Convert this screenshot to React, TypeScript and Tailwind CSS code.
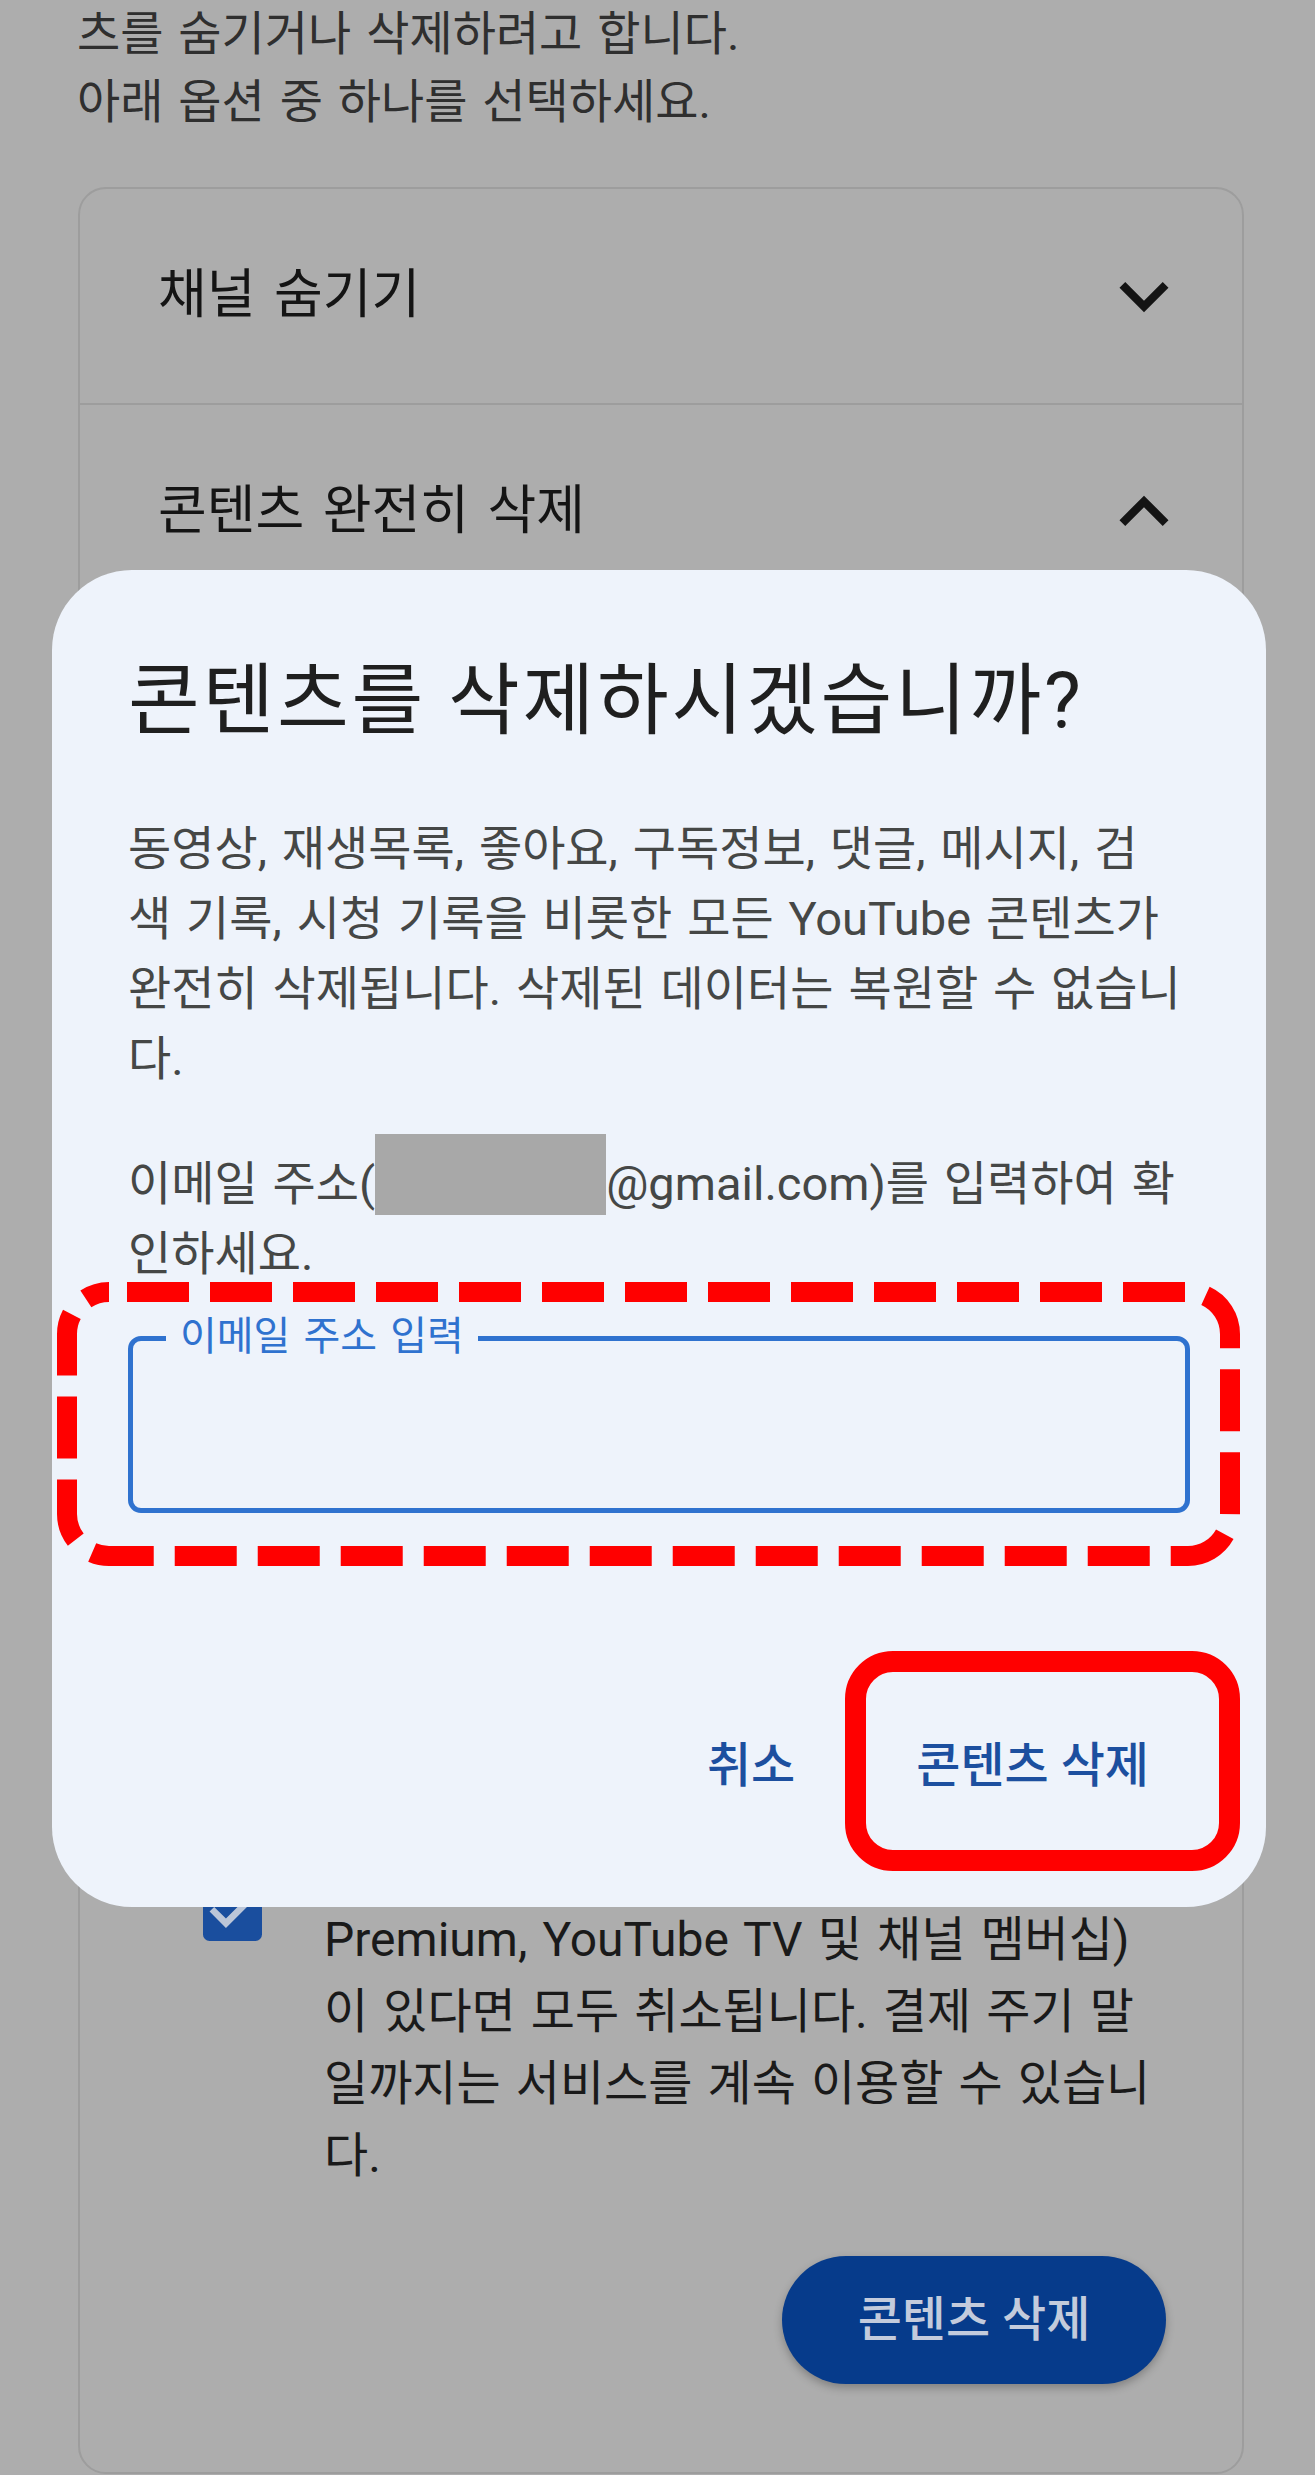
import React from 'react';

const FONT = "font-['Roboto','Noto_Sans_CJK_KR',sans-serif]";

function Chevron({ up }: { up?: boolean }) {
  return (
    <svg width="98" height="98" viewBox="0 0 24 24" fill="#141414" className="shrink-0">
      <path
        d={
          up
            ? 'M12 8l-6 6 1.41 1.41L12 10.83l4.59 4.58L18 14z'
            : 'M16.59 8.59L12 13.17 7.41 8.59 6 10l6 6 6-6z'
        }
      />
    </svg>
  );
}

function CheckBox() {
  return (
    <svg width="59" height="59" viewBox="3 3 18 18" className="shrink-0">
      <rect x="3" y="3" width="18" height="18" rx="2" fill="#1a4e9e" />
      <path d="M10 17l-5-5 1.41-1.41L10 14.17l7.59-7.59L19 8l-9 9z" fill="#bcc6d8" />
    </svg>
  );
}

function DeleteDialog() {
  return (
    <div className="absolute left-[52px] top-[570px] w-[1214px] h-[1337px] rounded-[80px] bg-[#eef3fb] pt-[87px] px-[76px]">
      <h2 className="text-[78px] leading-[90px] tracking-[0.035em] text-[#1f1f1f] whitespace-nowrap [word-spacing:normal]">
        콘텐츠를 삭제하시겠습니까?
      </h2>

      <p className="mt-[67px] text-[47px] leading-[70px] text-[#454746] whitespace-nowrap">
        동영상, 재생목록, 좋아요, 구독정보, 댓글, 메시지, 검<br />
        색 기록, 시청 기록을 비롯한 모든 YouTube 콘텐츠가<br />
        완전히 삭제됩니다. 삭제된 데이터는 복원할 수 없습니<br />
        다.
      </p>

      <p className="mt-[55px] text-[47px] leading-[70px] text-[#454746] whitespace-nowrap">
        이메일 주소(
        <span className="inline-block w-[231px] h-[81px] -mt-[30px] -mb-[15px] align-baseline bg-[#a8a8a8]" />
        @gmail.com)를 입력하여 확<br />
        인하세요.
      </p>

      {/* email field */}
      <div className="relative mt-[47px] h-[177px] rounded-[13px] border-[5px] border-[#2f72cf]">
        <span className="absolute left-[33px] top-[-26px] px-[14px] bg-[#eef3fb] text-[40px] leading-[44px] text-[#2f72cf] whitespace-nowrap">
          이메일 주소 입력
        </span>
        <svg
          className="absolute left-[-76px] top-[-59px] pointer-events-none"
          width="1183"
          height="284"
          viewBox="0 0 1183 284"
          fill="none"
        >
          <rect
            x="10"
            y="10"
            width="1163"
            height="264"
            rx="42"
            stroke="#ff0000"
            strokeWidth="20"
            strokeDasharray="62 21"
            strokeDashoffset="-18"
          />
        </svg>
      </div>

      <div className="mt-[198px] flex h-[110px] justify-end gap-[40px]">
        <button className="px-[40px] text-[48px] font-medium text-[#1c4f9f]">취소</button>
        <div className="relative">
          <button className="h-full px-[41px] text-[48px] font-medium text-[#1c4f9f] whitespace-nowrap">
            콘텐츠 삭제
          </button>
          <div className="absolute right-[-50px] top-[-60px] w-[395px] h-[220px] rounded-[48px] border-[21px] border-[#ff0000] pointer-events-none" />
        </div>
      </div>
    </div>
  );
}

export default function App() {
  return (
    <div className={`relative w-[1315px] h-[2475px] overflow-hidden bg-[#adadad] [word-spacing:0.2em] ${FONT}`}>
      <p className="pl-[77px] text-[47px] leading-[68px] text-[#2f2f2f] whitespace-nowrap">
        츠를 숨기거나 삭제하려고 합니다.<br />
        아래 옵션 중 하나를 선택하세요.
      </p>

      <div className="mt-[51px] ml-[78px] w-[1166px] rounded-[28px] border-2 border-[#9d9d9d]">
        <div className="flex h-[214px] items-center justify-between pl-[78px] pr-[49px]">
          <span className="text-[53px] text-[#141414] [word-spacing:0.1em]">채널 숨기기</span>
          <Chevron />
        </div>
        <div className="h-[2px] bg-[#9d9d9d]" />
        <div className="flex h-[214px] items-center justify-between pl-[78px] pr-[49px]">
          <span className="text-[53px] text-[#141414] [word-spacing:0.1em]">콘텐츠 완전히 삭제</span>
          <Chevron up />
        </div>

        {/* the part of the open panel that sits behind the dialog */}
        <div className="h-[1213px]" />

        <div className="flex text-[48px] leading-[72px] text-[#1a1a1a]">
          <div className="ml-[123px] mt-[50px]">
            <CheckBox />
          </div>
          <p className="ml-[62px] whitespace-nowrap">
            유료 멤버십(YouTube
            <br />
            Premium, YouTube TV 및 채널 멤버십)
            <br />
            이 있다면 모두 취소됩니다. 결제 주기 말
            <br />
            일까지는 서비스를 계속 이용할 수 있습니
            <br />
            다.
          </p>
        </div>

        <div className="mt-[64px] flex justify-end pr-[76px] pb-[88px]">
          <button className="h-[128px] w-[384px] rounded-full bg-[#063b8b] text-[48px] font-medium text-[#c3cbdc] shadow-[0_4px_8px_rgba(0,0,0,0.25)]">
            콘텐츠 삭제
          </button>
        </div>
      </div>

      <DeleteDialog />
    </div>
  );
}
